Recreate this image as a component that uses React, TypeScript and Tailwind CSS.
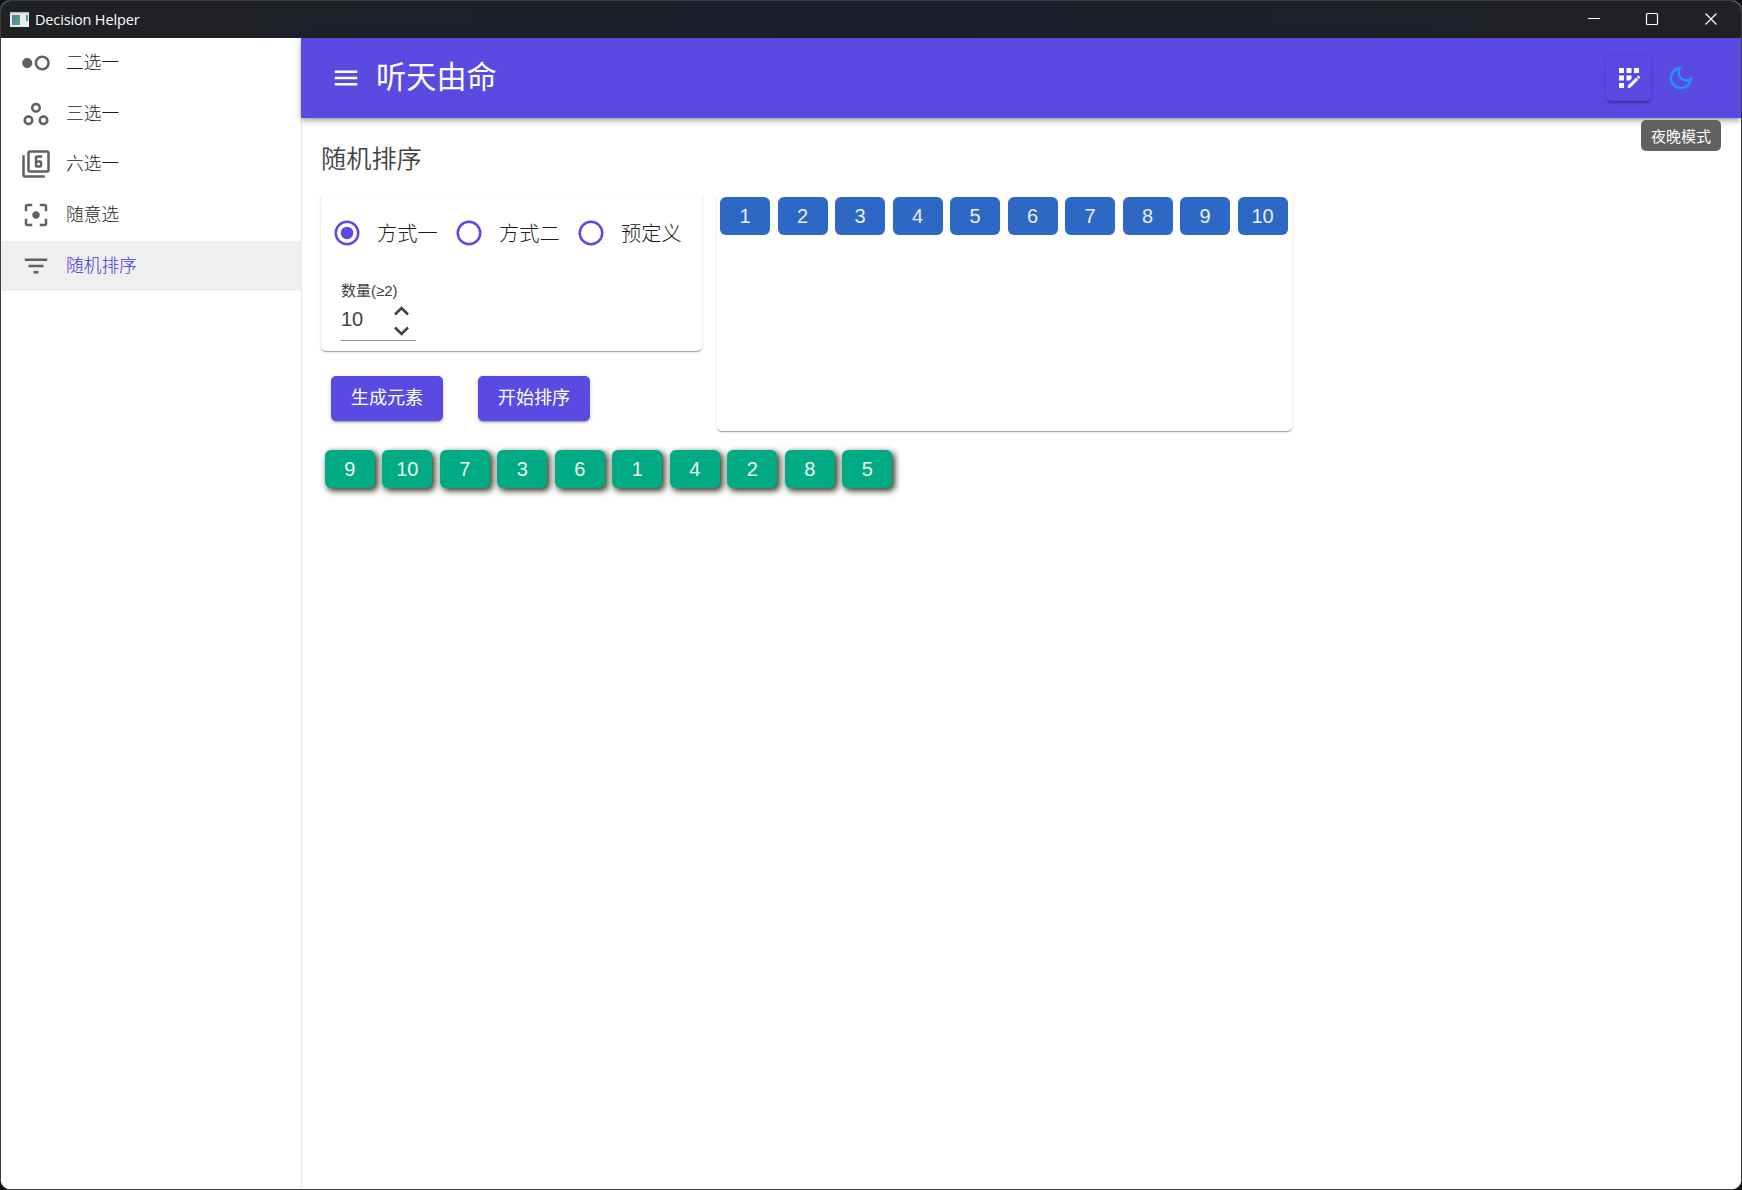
import React from "react";
import type { IconType } from "react-icons";
import {
  MdAppRegistration,
  MdFilter6,
  MdFilterCenterFocus,
  MdFilterList,
  MdHdrWeak,
  MdMenu,
  MdOutlineDarkMode,
  MdOutlineWorkspaces,
} from "react-icons/md";

const navItems: { label: string; icon: IconType; active?: boolean }[] = [
  { label: "二选一", icon: MdHdrWeak },
  { label: "三选一", icon: MdOutlineWorkspaces },
  { label: "六选一", icon: MdFilter6 },
  { label: "随意选", icon: MdFilterCenterFocus },
  { label: "随机排序", icon: MdFilterList, active: true },
];

const source = [1, 2, 3, 4, 5, 6, 7, 8, 9, 10];
const shuffled = [9, 10, 7, 3, 6, 1, 4, 2, 8, 5];
const cardShadow =
  "shadow-[0_2px_1px_-1px_rgba(0,0,0,0.2),0_1px_1px_0_rgba(0,0,0,0.14),0_1px_3px_0_rgba(0,0,0,0.12)]";
const buttonShadow =
  "shadow-[0_3px_1px_-2px_rgba(0,0,0,0.2),0_2px_2px_0_rgba(0,0,0,0.14),0_1px_5px_0_rgba(0,0,0,0.12)]";

function TitleBar() {
  return (
    <div className="flex h-[37px] shrink-0 items-center bg-linear-to-r from-[#202124] via-[#1a1f2d] to-[#202124] pl-[9px]">
      <svg width="19" height="15" viewBox="0 0 19 15">
        <defs>
          <linearGradient id="app" x1="0" y1="0" x2="1" y2="1">
            <stop offset="0" stopColor="#4a7fa5" />
            <stop offset="1" stopColor="#4fae7a" />
          </linearGradient>
        </defs>
        <rect width="19" height="15" fill="#e9ebee" />
        <rect width="19" height="1.5" fill="#b9bdc2" />
        <rect x="2" y="3" width="8" height="10" fill="url(#app)" />
        <rect x="16" y="3" width="2" height="6" fill="#4f9aa0" />
      </svg>
      <span className="ml-1.5 font-['Open_Sans',sans-serif] text-[14.5px] tracking-[-0.15px] text-white">
        Decision Helper
      </span>
      <div className="ml-auto flex h-full items-center">
        <svg width="58" height="37" viewBox="0 0 58 37" stroke="#fff" strokeWidth="1">
          <path d="M23 17.5h12" />
        </svg>
        <svg width="58" height="37" viewBox="0 0 58 37" stroke="#fff" strokeWidth="1.2" fill="none">
          <rect x="23.5" y="12.5" width="11" height="11" rx="1" />
        </svg>
        <svg width="60" height="37" viewBox="0 0 60 37" stroke="#fff" strokeWidth="1.2">
          <path d="M24.5 12.5l11 11M35.5 12.5l-11 11" />
        </svg>
      </div>
    </div>
  );
}

function Sidebar() {
  return (
    <nav className="flex w-[300px] shrink-0 flex-col gap-[0.7px] bg-white">
      {navItems.map(({ label, icon: Icon, active }) => (
        <div key={label} className={active ? "flex h-[50px] items-center bg-[#efefef] pl-5" : "flex h-[50px] items-center pl-5"}>
          <Icon size={30} color="#616161" />
          <span
            className={
              active
                ? "ml-[15px] pt-[1.5px] text-[17.7px] leading-none font-light text-[#4534dc]"
                : "ml-[15px] pt-[1.5px] text-[17.7px] leading-none font-light text-[#1c1c1c]"
            }
          >
            {label}
          </span>
        </div>
      ))}
    </nav>
  );
}

function Header() {
  return (
    <header className="relative z-10 flex h-20 shrink-0 items-center bg-[#594ae2] pr-[45px] pl-[30px] text-white shadow-[0_2px_4px_-1px_rgba(0,0,0,0.2),0_4px_5px_0_rgba(0,0,0,0.14),0_1px_10px_0_rgba(0,0,0,0.12)]">
      <MdMenu size={30} />
      <h1 className="ml-[15px] text-[30.2px] leading-none font-normal">听天由命</h1>
      <button className={`ml-auto flex size-[45px] items-center justify-center rounded-[5px] ${buttonShadow}`}>
        <MdAppRegistration size={30} />
      </button>
      <div className="relative ml-[15px]">
        <MdOutlineDarkMode size={30} color="#2196f3" />
        <div className="absolute top-[57px] left-1/2 flex h-[31px] w-20 -translate-x-1/2 items-center justify-center rounded-[5px] bg-[#616161] pt-px text-[15px] leading-none whitespace-nowrap">
          夜晚模式
        </div>
      </div>
    </header>
  );
}

function Radio({ label, checked }: { label: string; checked?: boolean }) {
  return (
    <label className="flex w-[122px] items-center">
      <svg width="30" height="30" viewBox="0 0 24 24">
        <circle cx="12" cy="12" r="9" fill="none" stroke="#594ae2" strokeWidth="2" />
        {checked && <circle cx="12" cy="12" r="5" fill="#594ae2" />}
      </svg>
      <span className="ml-[15px] pt-[1.5px] text-[20.2px] leading-none font-light whitespace-nowrap text-[#1c1c1c]">{label}</span>
    </label>
  );
}

function NumberField() {
  return (
    <div className="mt-[34px] ml-5 w-[75px] border-b border-[#949494] text-[#424242]">
      <div className="text-[15px] leading-[18px] whitespace-nowrap">数量(≥2)</div>
      <div className="flex h-10 items-center justify-between pr-[7.5px]">
        <span className="pb-0.5 text-[20px]">10</span>
        <svg width="15" height="32" viewBox="0 0 15 32" fill="none" stroke="#424242" strokeWidth="2.5">
          <path d="M1 10.500l6.500-6.500 6.500 6.500M1 23.500l6.500 6.500 6.500-6.500" />
        </svg>
      </div>
    </div>
  );
}

function ActionButton({ label }: { label: string }) {
  return (
    <button className={`h-[45px] w-28 rounded-[5px] bg-[#594ae2] text-[18.1px] leading-none text-white ${buttonShadow}`}>
      {label}
    </button>
  );
}

function SortPage() {
  return (
    <main className="flex flex-1 flex-col border-l border-[#e8e8e8] bg-white pl-[19px]">
      <h2 className="mt-[28px] text-[25.2px] leading-[26px] font-[350] text-[#424242]">随机排序</h2>
      <div className="mt-[21px] flex gap-[15px]">
        <div className="w-[381px]">
          <section className={`h-[158px] rounded-[5px] bg-white pt-[25px] ${cardShadow}`}>
            <div className="flex pl-[11px]">
              <Radio label="方式一" checked />
              <Radio label="方式二" />
              <Radio label="预定义" />
            </div>
            <NumberField />
          </section>
          <div className="mt-[25px] flex gap-[35px] pl-2.5">
            <ActionButton label="生成元素" />
            <ActionButton label="开始排序" />
          </div>
        </div>
        <section className={`flex h-[238px] w-[575px] items-start gap-[7.500px] rounded-[5px] bg-white pt-1 pl-[3px] ${cardShadow}`}>
          {source.map((n) => (
            <div key={n} className="flex h-[38px] w-[50px] items-center justify-center rounded-[6px] bg-[#2d68c4] text-[20px] text-[#eceef5]">
              {n}
            </div>
          ))}
        </section>
      </div>
      <div className="mt-[19px] flex gap-[7.500px] pl-[3.75px]">
        {shuffled.map((n) => (
          <div
            key={n}
            className="flex h-[38px] w-[50px] items-center justify-center rounded-[6px] bg-[#00ab84] text-[20px] text-[#eef5ee] shadow-[2.500px_2.500px_6px_0_#3c3c28]"
          >
            {n}
          </div>
        ))}
      </div>
    </main>
  );
}

export default function App() {
  return (
    <div className="h-[1190px] w-[1742px] bg-[#111]">
      <div className="flex h-full w-full flex-col overflow-hidden rounded-[10px] border border-[#3c3d3f] bg-white font-['Liberation_Sans','Noto_Sans_CJK_SC',sans-serif]">
        <TitleBar />
        <div className="flex min-h-0 flex-1">
          <Sidebar />
          <div className="flex min-w-0 flex-1 flex-col">
            <Header />
            <SortPage />
          </div>
        </div>
      </div>
    </div>
  );
}
